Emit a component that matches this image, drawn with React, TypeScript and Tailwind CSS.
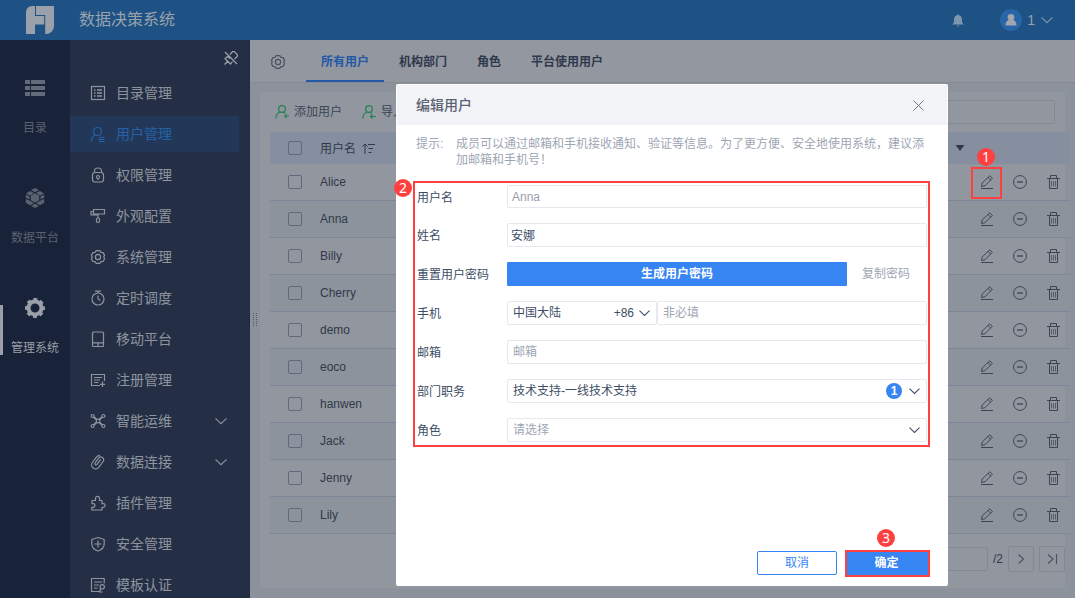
import type { ReactNode } from 'react'

const NAV_ITEMS = [
  { label: '目录管理', icon: 'catalog' },
  { label: '用户管理', icon: 'user', active: true },
  { label: '权限管理', icon: 'lock' },
  { label: '外观配置', icon: 'roller' },
  { label: '系统管理', icon: 'gear' },
  { label: '定时调度', icon: 'timer' },
  { label: '移动平台', icon: 'mobile' },
  { label: '注册管理', icon: 'register' },
  { label: '智能运维', icon: 'network', expandable: true },
  { label: '数据连接', icon: 'clip', expandable: true },
  { label: '插件管理', icon: 'plugin' },
  { label: '安全管理', icon: 'shield' },
  { label: '模板认证', icon: 'template' },
]

const TABS = ['所有用户', '机构部门', '角色', '平台使用用户']

const USERS = ['Alice', 'Anna', 'Billy', 'Cherry', 'demo', 'eoco', 'hanwen', 'Jack', 'Jenny', 'Lily']

// 16x16 stroke icons
const ICONS: Record<string, ReactNode> = {
  catalog: (
    <>
      <rect x="1.5" y="1.5" width="13" height="13" />
      <path d="M4 5h1.5M4 8h1.5M4 11h1.5M7 5h5M7 8h5M7 11h5" strokeWidth="1.5" />
    </>
  ),
  user: (
    <>
      <circle cx="7.5" cy="5.5" r="4" />
      <path d="M5 9C2.8 10.2 1.5 12 1.5 15.5M9 11.500h5.500M8 13.500h6.500M9 15.500h5.500" />
    </>
  ),
  lock: (
    <>
      <rect x="2.500" y="5.500" width="11" height="9.500" rx="2.500" />
      <path d="M4.500 5.500V4a3.500 3 0 0 1 7 0v1.500M8 11.500V13" />
      <circle cx="8" cy="10" r="1.5" />
    </>
  ),
  roller: (
    <>
      <path d="M3.500 1.500h11v4.500h-11zM3.500 3.500h-2.500V7H8v3" />
      <rect x="6.500" y="10" width="3" height="4.500" rx="1.200" />
    </>
  ),
  gear: (
    <>
      <path d="M6.200 1.600h3.600l1.200 1.800 2.100.2 1.500 2.800-.9 1.600.9 1.700-1.500 2.800-2.100.2-1.200 1.700H6.200L5 12.700l-2.100-.2-1.500-2.800L2.300 8l-.9-1.600 1.500-2.800L5 3.400z" strokeLinejoin="round" />
      <circle cx="8" cy="8" r="2.600" />
    </>
  ),
  timer: (
    <>
      <circle cx="8" cy="9" r="6" />
      <path d="M5 1.200h6M8 1.200V3M8 5.500V9l2.500 1.500" />
    </>
  ),
  mobile: (
    <>
      <rect x="2.500" y="1" width="11" height="14.500" rx="1" />
      <path d="M2.500 11.800h11M8 12v3" />
    </>
  ),
  register: (
    <>
      <path d="M14.500 9V2.500h-13v11h8.500M4 5.500h8M4 8h6M4 10.500h4.500M12.500 9.500v5.500M10 12.300h5" />
    </>
  ),
  network: (
    <>
      <circle cx="2.600" cy="3" r="1.500" />
      <circle cx="13.400" cy="3" r="1.500" />
      <circle cx="2.600" cy="13" r="1.500" />
      <circle cx="13.400" cy="13" r="1.500" />
      <circle cx="8" cy="8" r="1.800" />
      <path d="M3.800 4l2.800 2.600M12.200 4L9.400 6.600M3.800 12l2.800-2.600M12.200 12L9.400 9.400" strokeWidth="1.900" />
    </>
  ),
  clip: (
    <path d="M10.800 5.300L7 10.400a1.200 1.200 0 0 1-2-1.300l3.800-5.200A2.800 2.800 0 0 1 13.400 7l-4.500 6.200a4 4 0 0 1-6.500-4.700l4-5.300A4.600 4.600 0 0 1 10 1.300" />
  ),
  plugin: (
    <path d="M2 5.500h3.500V3.300a2 2 0 0 1 4 0v2.200H12v3.200h1.300a1.800 1.800 0 0 1 0 3.600H12V15H1.800v-2.700h1.400a1.800 1.800 0 0 0 0-3.600H2z" strokeLinejoin="round" />
  ),
  shield: (
    <>
      <path d="M8 1.500l6.200 2V8c0 3.500-2.600 5.800-6.200 7C4.400 13.800 1.800 11.500 1.800 8V3.500z" strokeLinejoin="round" />
      <path d="M8 4.500v7M4.500 8h7" />
    </>
  ),
  template: (
    <>
      <path d="M14.200 6.500v-5H1.500v13H9M4 5h8M4 8h5M4 11h3.500M10.800 11.500L9.500 15h3.200" />
      <circle cx="12.200" cy="9.800" r="2.200" />
    </>
  ),
}

function Icon({ name, className }: { name: string; className: string }) {
  return (
    <svg viewBox="0 0 16 16" fill="none" stroke="currentColor" strokeWidth="1.2" className={className}>
      {ICONS[name]}
    </svg>
  )
}

function Chevron({ className }: { className: string }) {
  return (
    <svg viewBox="0 0 12 8" fill="none" stroke="currentColor" strokeWidth="1.1" className={className}>
      <path d="M.5 1.300L6 6.700l5.500-5.400" />
    </svg>
  )
}

function Callout({ n, className }: { n: number; className: string }) {
  return (
    <span className={`absolute z-20 flex h-[18px] w-[18px] items-center justify-center rounded-full bg-[#ff4040] font-['Noto_Sans'] text-sm leading-none text-white ${className}`}>
      {n}
    </span>
  )
}

function TopBar() {
  return (
    <header className="flex h-10 shrink-0 items-center bg-[#1e5285] text-[#9aa2ad]">
      <svg viewBox="0 0 28 28" className="ml-[26px] h-7 w-7" fill="#9ba1ab">
        <path d="M6 0h3v10h9.200v8.500H9V28H0V6a6 6 0 0 1 6-6z" />
        <path d="M10 0h18v20a8 8 0 0 1-8 8h-.800V9H10z" />
      </svg>
      <h1 className="ml-[25px] flex-1 text-base leading-none">数据决策系统</h1>
      <svg viewBox="0 0 12 13" className="h-[13px] w-3" fill="#7e95b0">
        <path d="M6 0l.9 1.300C9 1.800 10 3.500 10 6v2.500l1.800 2H.2l1.800-2V6c0-2.500 1-4.200 3.100-4.700zM4.500 11.500h3L6 12.800z" />
      </svg>
      <span className="ml-9 flex h-[22px] w-[22px] items-center justify-center rounded-full bg-[#2866a8]">
        <svg viewBox="0 0 12 12" className="h-3 w-3" fill="#a0a5ae">
          <circle cx="6" cy="3.300" r="3.300" />
          <path d="M3.500 6h5c1.900.8 3 2.500 3 5.500H.5C.5 8.500 1.600 6.800 3.500 6z" />
        </svg>
      </span>
      <span className="ml-[5px] text-sm">1</span>
      <Chevron className="ml-[6px] mr-[22px] h-2 w-3 text-[#7e95b0]" />
    </header>
  )
}

function Rail() {
  return (
    <div className="flex w-[70px] shrink-0 flex-col bg-[#182238] text-xs text-[#5b6370]">
      <div className="flex h-[110px] flex-col items-center pt-[38px]">
        <svg viewBox="0 0 20 20" className="h-5 w-5" fill="#636a78">
          <path d="M0 2h5v4H0zM6 2h14v4H6zM0 8h5v4H0zM6 8h14v4H6zM0 14h5v4H0zM6 14h14v4H6z" />
        </svg>
        <span className="mt-[21px] leading-[18px]">目录</span>
      </div>
      <div className="flex h-[110px] flex-col items-center pt-[38px]">
        <svg viewBox="0 0 20 20" className="h-5 w-5" fill="#5a6170">
          <path d="M10 0l4 2-4 2.200L6 2zM5 3l4 2-4 2.700L1 5.500zM15 3l4 2.500-4 2.200L11 5zM.8 6.500l3.700 2v3L.8 9.800zM19.200 6.500l-3.700 2v3l3.700-1.700zM.8 11L5 12.700l4 2.500L5 17.300.8 14.800zM19.200 11L15 12.700l-4 2.500 4 2.100 4.200-2.500zM10 15.800l4 2.200-4 2-4-2z" />
          <path d="M10 5.300l4.200 2.400v4.600L10 14.700l-4.200-2.400V7.700z" />
        </svg>
        <span className="mt-[21px] leading-[18px]">数据平台</span>
      </div>
      <div className="relative flex h-[110px] flex-col items-center pt-[38px] text-[#9b9fa8]">
        <span className="absolute left-0 top-[45px] h-[50px] w-[3px] bg-[#9b9fa8]" />
        <svg viewBox="0 0 20 20" className="h-5 w-5">
          <circle cx="10" cy="10" r="6.500" fill="none" stroke="currentColor" strokeWidth="4" />
          <circle cx="10" cy="10" r="8.800" fill="none" stroke="currentColor" strokeWidth="2.400" strokeDasharray="3.912 3" strokeDashoffset="1.956" />
        </svg>
        <span className="mt-[21px] leading-[18px]">管理系统</span>
      </div>
    </div>
  )
}

function SideNav() {
  return (
    <nav className="flex w-[180px] shrink-0 flex-col border-r border-[#202b42] bg-[#242f46] text-sm text-[#8e949e]">
      <div className="flex h-[35px] shrink-0 justify-end pr-[10px] pt-[10px]">
        <svg viewBox="0 0 16 16" className="h-4 w-4" fill="none" stroke="#a0a4ab" strokeWidth="1.200">
          <path d="M2 2l12 12M7 4.500l2.500-2.800h1.800l3 3v1.800L11.500 9M4.500 6.500L2 8.500l5.500 5.500 2-2.500M5 11l-3.500 3.500M4.500 6.500L7 8.500" />
        </svg>
      </div>
      <div className="flex flex-col gap-[5px]">
        {NAV_ITEMS.map(item => (
          <div
            key={item.label}
            className={`mr-[10px] flex h-9 shrink-0 items-center pl-5 ${item.active ? 'bg-[#233859] text-[#2462a8]' : ''}`}
          >
            <Icon name={item.icon} className="h-4 w-4" />
            <span className="ml-[10px] flex-1 leading-none">{item.label}</span>
            {item.expandable && <Chevron className="mr-3 h-2 w-3" />}
          </div>
        ))}
      </div>
    </nav>
  )
}

function Checkbox() {
  return <span className="ml-[18px] h-[14px] w-[14px] rounded-[2px] border border-[#606a7c]" />
}

function RowActions() {
  return (
    <div className="ml-auto mr-[10px] flex items-center gap-[19px] text-[#3d4453]">
      <svg viewBox="0 0 14 14" className="h-[14px] w-[14px]" fill="none" stroke="currentColor">
        <path d="M1.500 11.500l.7-3.500L9.700.8l2.700 2.500L5 10.700zM8 2.500l2.700 2.600M1 13.500h12" />
      </svg>
      <svg viewBox="0 0 14 14" className="h-[14px] w-[14px]" fill="none" stroke="currentColor">
        <circle cx="7" cy="7" r="6.400" />
        <path d="M4 7h6" strokeWidth="1.300" />
      </svg>
      <svg viewBox="0 0 14 14" className="h-[14px] w-[14px]" fill="none" stroke="currentColor">
        <path d="M1 3.500h13M4.500 3.500V.5h6v3M3.500 3.500v10h8v-10" />
        <path d="M5.500 6v5.500M7.500 6v5.500M9.500 6v5.500" strokeOpacity=".7" />
      </svg>
    </div>
  )
}

function Toolbar() {
  return (
    <div className="flex h-10 items-center pl-[15px] pr-[10px] text-xs text-[#3b4557]">
      <svg viewBox="0 0 14 14" className="h-[14px] w-[14px]" fill="none" stroke="#218350" strokeWidth="1.200">
        <circle cx="7" cy="4" r="3.400" />
        <path d="M5 7C2.500 8 .8 10 .8 13.500M11 8.500v5M8.500 11h5.500M8 7l2 1" />
      </svg>
      <span className="ml-[5px]">添加用户</span>
      <svg viewBox="0 0 14 14" className="ml-5 h-[14px] w-[14px]" fill="none" stroke="#218350" strokeWidth="1.200">
        <circle cx="7" cy="4" r="3.400" />
        <path d="M5 7C2.500 8 .8 10 .8 13.500M14 11.500H8.500M10.500 9.500l-2 2 2 2M8.500 7.500l1.500 1" />
      </svg>
      <span className="ml-[5px]">导入</span>
      <div className="ml-auto h-6 w-[200px] rounded-[2px] border border-[#838993]" />
    </div>
  )
}

function UserTable() {
  return (
    <div className="ml-[10px] w-[800px] text-xs text-[#30394b]">
      <div className="flex h-8 items-center bg-[#858f9f]">
        <Checkbox />
        <span className="ml-[18px] pt-[2px]">用户名</span>
        <svg viewBox="0 0 13 11" className="ml-[6px] h-[11px] w-[13px]" fill="none" stroke="currentColor">
          <path d="M3 11V1M.5 3.500L3 1l2.500 2.500M6 1.500h7M6.500 5.500h4.500M6.500 9.500h3" />
        </svg>
        <svg viewBox="0 0 10 6" className="ml-auto mr-[105px] h-[6px] w-[10px]" fill="currentColor">
          <path d="M.5 0h9L5 6z" />
        </svg>
      </div>
      {USERS.map((name, i) => (
        <div key={name} className={`flex h-[37px] items-center border-b border-[#7d8799] ${i % 2 === 1 ? 'bg-[#8c939c]' : ''}`}>
          <Checkbox />
          <span className="ml-[18px]">{name}</span>
          <RowActions />
        </div>
      ))}
    </div>
  )
}

function Pagination() {
  return (
    <div className="mt-3 flex h-[26px] items-center justify-end gap-[5px] text-xs text-[#30394b]">
      <div className="h-6 w-[60px] rounded-[2px] border border-[#838993]" />
      <span>/2</span>
      <span className="flex h-[26px] w-[26px] items-center justify-center rounded-[2px] border border-[#838993]">
        <svg viewBox="0 0 12 12" className="h-3 w-3" fill="none" stroke="#4a5262" strokeWidth="1.100">
          <path d="M3.500 1.500L8.500 6l-5 4.500" />
        </svg>
      </span>
      <span className="flex h-[26px] w-[26px] items-center justify-center rounded-[2px] border border-[#838993]">
        <svg viewBox="0 0 12 12" className="h-3 w-3" fill="none" stroke="#4a5262" strokeWidth="1.100">
          <path d="M2 1.500L7 6l-5 4.500M10.500 1v10" />
        </svg>
      </span>
    </div>
  )
}

function Field({ label, children }: { label: string; children: ReactNode }) {
  return (
    <div className="flex h-6 items-center">
      <span className="w-[90px] shrink-0 pt-[2px]">{label}</span>
      {children}
    </div>
  )
}

function EditUserDialog() {
  const box = 'flex items-center rounded-[2px] border border-[#e7e9ee] pl-[5px] pr-[6px]'
  return (
    <div className="absolute left-[396px] top-[84px] z-10 flex h-[502px] w-[552px] flex-col rounded-[2px] bg-white text-xs text-[#3d4d66]">
      <div className="mx-px mt-px flex h-10 items-center justify-between bg-[#f2f3f7] pl-[19px] pr-[23px]">
        <h2 className="text-sm font-medium text-[#5b6375]">编辑用户</h2>
        <svg viewBox="0 0 11 11" className="h-[11px] w-[11px]" fill="none" stroke="#6e7887">
          <path d="M.5.5l10 10M10.500.5l-10 10" />
        </svg>
      </div>
      <div className="mt-[11px] flex pl-5 leading-4 text-[#9ea6b3]">
        <span className="w-10 shrink-0">提示:</span>
        <p className="w-[470px]">成员可以通过邮箱和手机接收通知、验证等信息。为了更方便、安全地使用系统，建议添加邮箱和手机号！</p>
      </div>
      <div className="ml-[17px] mt-[13px] flex h-[266px] w-[517px] flex-col border-2 border-[#ff4040] pl-[2px] pt-[2px]">
        <div className="flex flex-col gap-[15px]">
          <div className="-mb-px">
            <Field label="用户名">
              <div className="mb-px flex h-[23px] w-[420px] items-center rounded-[2px] border border-[#e7e9ee] px-1 pt-px text-[#979eab]">Anna</div>
            </Field>
          </div>
          <Field label="姓名">
            <div className="flex h-6 w-[420px] items-center rounded-[2px] border border-[#e7e9ee] px-[3px] pt-[2px]">安娜</div>
          </Field>
          <Field label="重置用户密码">
            <button className="h-6 w-[340px] rounded-[1px] bg-[#3685f2] font-bold text-white">生成用户密码</button>
            <span className="ml-[15px] text-[#9ea6b3]">复制密码</span>
          </Field>
          <Field label="手机">
            <div className={`h-6 w-[150px] ${box}`}>
              <span className="flex-1">中国大陆</span>
              <span>+86</span>
              <Chevron className="ml-[5px] h-2 w-[11px]" />
            </div>
            <div className={`h-6 w-[270px] text-[#9ea6b3] ${box}`}>非必填</div>
          </Field>
          <Field label="邮箱">
            <div className={`h-6 w-[420px] text-[#9ea6b3] ${box}`}>邮箱</div>
          </Field>
          <Field label="部门职务">
            <div className={`h-6 w-[420px] ${box}`}>
              <span className="flex-1">技术支持-一线技术支持</span>
              <span className="flex h-4 w-4 items-center justify-center rounded-full bg-[#3685f2] text-xs font-bold leading-none text-white">1</span>
              <Chevron className="ml-[7px] h-2 w-[11px]" />
            </div>
          </Field>
          <Field label="角色">
            <div className={`h-6 w-[420px] text-[#9ea6b3] ${box}`}>
              <span className="flex-1">请选择</span>
              <Chevron className="h-2 w-[11px] text-[#3d4d66]" />
            </div>
          </Field>
        </div>
      </div>
      <div className="mb-[9px] mr-[18px] mt-auto flex items-center justify-end gap-2">
        <button className="-mt-px h-6 w-20 rounded-[2px] border border-[#3685f2] text-[#3685f2]">取消</button>
        <button className="h-[27px] w-[85px] border-2 border-[#ff4040] bg-[#3685f2] pb-[2px] pr-[2px] font-bold text-white">确定</button>
      </div>
    </div>
  )
}

export default function App() {
  return (
    <div className="relative flex h-[598px] w-[1075px] flex-col overflow-hidden bg-[#8b929c] font-['Liberation_Sans','Noto_Sans_CJK_SC',sans-serif]">
      <TopBar />
      <div className="flex min-h-0 flex-1">
        <Rail />
        <SideNav />
        <main className="flex min-w-0 flex-1 flex-col">
          {/* Tabs */}
          <div className="flex h-[43px] shrink-0 border-b border-[#858a94] bg-[#93979f] pl-5">
            <Icon name="gear" className="mr-5 mt-[14px] h-4 w-4 text-[#4a5261]" />
            {TABS.map((tab, i) => (
              <div
                key={tab}
                className={`flex h-[42px] items-center border-b-2 px-[15px] pt-1 text-xs font-bold ${
                  i === 0 ? 'border-[#2459a5] text-[#2459a5]' : 'border-transparent text-[#2f394c]'
                }`}
              >
                {tab}
              </div>
            ))}
          </div>

          <div className="flex min-h-0 flex-1">
            {/* Resize handle */}
            <div className="flex w-[10px] shrink-0 items-center pb-[3px] pl-[3px]">
              <svg viewBox="0 0 5 13" className="mb-[39px] h-[13px] w-[5px]" stroke="#505a70" strokeDasharray="1 1">
                <path d="M.5 0v13M3.500 0v13" />
              </svg>
            </div>
            <div className="mb-[10px] mt-[9px] w-[805px] shrink-0 bg-[#92969e]">
              <Toolbar />
              <UserTable />
              <Pagination />
            </div>
          </div>
        </main>
      </div>

      <EditUserDialog />

      {/* Step markers */}
      <span className="absolute left-[971px] top-[167px] h-8 w-[31px] border-2 border-[#ff4040]" />
      <Callout n={1} className="left-[977px] top-[148px]" />
      <Callout n={2} className="left-[394px] top-[179px]" />
      <Callout n={3} className="left-[877px] top-[529px]" />
    </div>
  )
}
